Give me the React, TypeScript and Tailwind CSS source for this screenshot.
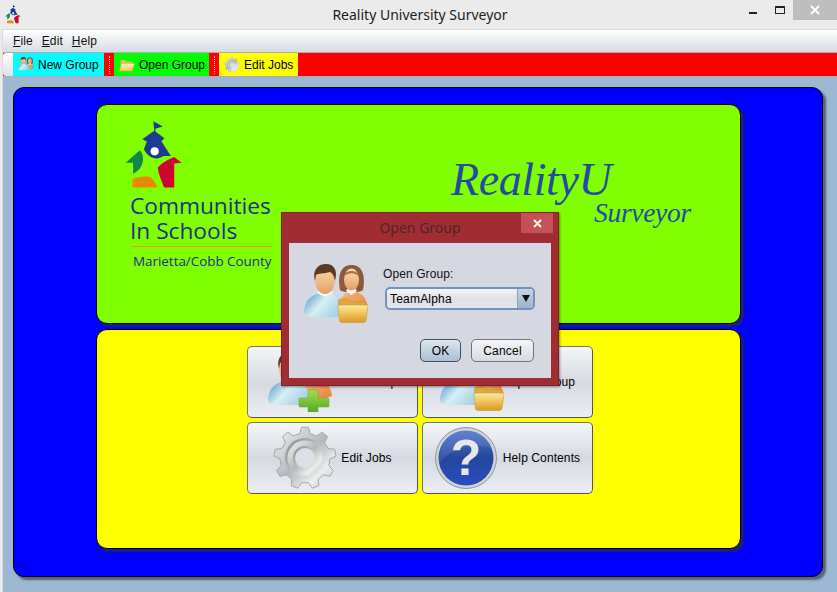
import React from "react";

const sans = "font-['Liberation_Sans',Arial,sans-serif]";

function Defs() {
  return (
    <svg width="0" height="0" className="absolute">
      <defs>
        <linearGradient id="shirt" x1="0" y1="0" x2="1" y2="0.5">
          <stop offset="0" stopColor="#4f94cc" />
          <stop offset="0.5" stopColor="#d6eef5" />
          <stop offset="1" stopColor="#a4d2e4" />
        </linearGradient>
        <linearGradient id="skin" x1="0" y1="0" x2="0" y2="1">
          <stop offset="0" stopColor="#fbdcb6" />
          <stop offset="1" stopColor="#e39f62" />
        </linearGradient>
        <linearGradient id="orange" x1="0" y1="0" x2="1" y2="1">
          <stop offset="0" stopColor="#f7b988" />
          <stop offset="1" stopColor="#e67e30" />
        </linearGradient>
        <linearGradient id="folder" x1="0" y1="0" x2="0" y2="1">
          <stop offset="0" stopColor="#fbe7a6" />
          <stop offset="0.5" stopColor="#f0c35a" />
          <stop offset="1" stopColor="#d8991f" />
        </linearGradient>
        <linearGradient id="green" x1="0" y1="0" x2="0" y2="1">
          <stop offset="0" stopColor="#a8dc50" />
          <stop offset="1" stopColor="#55a828" />
        </linearGradient>
        <linearGradient id="steel" x1="0" y1="0" x2="1" y2="1">
          <stop offset="0" stopColor="#f2f3f3" />
          <stop offset="0.5" stopColor="#b4b8bb" />
          <stop offset="0.75" stopColor="#eceded" />
          <stop offset="1" stopColor="#b9bcbf" />
        </linearGradient>
        <linearGradient id="steel2" x1="0" y1="0" x2="1" y2="1">
          <stop offset="0" stopColor="#85898c" />
          <stop offset="1" stopColor="#f4f5f5" />
        </linearGradient>
        <linearGradient id="ball" x1="0" y1="0" x2="0" y2="1">
          <stop offset="0" stopColor="#4c75cb" />
          <stop offset="0.5" stopColor="#23479c" />
          <stop offset="1" stopColor="#2b4cc0" />
        </linearGradient>
        <linearGradient id="tbfolder" x1="0" y1="0" x2="0" y2="1">
          <stop offset="0" stopColor="#fff3bb" />
          <stop offset="1" stopColor="#eec65c" />
        </linearGradient>
      </defs>
    </svg>
  );
}

function FolderShape() {
  return (
    <g>
      <path d="M34.500 42 L34.500 37 Q34.500 35 36.500 35 L43 35 Q44.500 35 45.500 36.500 L46.500 38 L60 38 Q62 38 62 40 L62 44Z" fill="#e0a93a" stroke="#c08a24" strokeWidth="0.5" />
      <path d="M34 43 Q34 41 36 41 L62 41 Q64.500 41 64 43 L62 56 Q61.800 58.500 59 58.500 L38 58.500 Q35.500 58.500 35.300 56 Z" fill="url(#folder)" stroke="#c8922a" strokeWidth="0.5" />
    </g>
  );
}

function People({ badge, size = 64 }: { badge?: "plus" | "folder"; size?: number }) {
  return (
    <svg width={size} height={(size * 60) / 64} viewBox="0 0 64 60" className="shrink-0">
      <path d="M36 44 Q36 31 44 28 L52 28 Q62 30 64 44 L52 48Z" fill="url(#orange)" />
      <path d="M36 26 C33 9 38 1 47.500 1 C57 1 62 9 59 26 C57 29 38 29 36 26Z" fill="#8a5a3a" />
      <path d="M42 27 L47.500 31 L53 27 L51 24 L44 24Z" fill="#fff" />
      <ellipse cx="47.500" cy="15.500" rx="7.500" ry="11" fill="url(#skin)" />
      <path d="M39.500 13 C41 5 54 5 55.500 13 C51 8 44 8 39.500 13Z" fill="#a86f42" />
      <path d="M0 46 Q2 33 13 30 L29 30 Q38 33 42 42 L40 53 L6 53 Q0 52 0 46Z" fill="url(#shirt)" />
      <path d="M13 29 L21 33 L29 29 L26 25 L16 25Z" fill="#f4f7f8" />
      <ellipse cx="21" cy="16" rx="10" ry="14" fill="url(#skin)" />
      <path d="M11 17 C8 6 14 0 22 0 C30 0 34 6 31 17 C30 11 28 9 26 8 C20 10 14 9 12 11 Z" fill="#5b3a26" />
      {badge === "folder" && <FolderShape />}
      {badge === "plus" && (
        <path d="M40 38 H50 V46 H60 Q61 46 61 47 V54 Q61 55 60 55 H50 V60 H40 V55 H32 Q31 55 31 54 V47 Q31 46 32 46 H40Z" fill="url(#green)" stroke="#6aa82e" strokeWidth="0.5" />
      )}
    </svg>
  );
}

function gearPath(teeth: number, R: number, r: number, c: number) {
  let d = "";
  const step = (Math.PI * 2) / teeth;
  for (let i = 0; i < teeth; i++) {
    const a = i * step - Math.PI / 2;
    const pts: [number, number][] = [
      [r, a - step * 0.3],
      [R, a - step * 0.16],
      [R, a + step * 0.16],
      [r, a + step * 0.3],
    ];
    pts.forEach(([rad, an], j) => {
      const x = c + rad * Math.cos(an);
      const y = c + rad * Math.sin(an);
      d += `${i === 0 && j === 0 ? "M" : "L"}${x.toFixed(2)} ${y.toFixed(2)} `;
    });
  }
  return d + "Z";
}

function Gear({ size = 64 }: { size?: number }) {
  return (
    <svg width={size} height={size} viewBox="0 0 64 64" className="shrink-0">
      <path d={gearPath(9, 31, 25, 32)} fill="url(#steel)" stroke="#a4a8ac" strokeWidth="1" strokeLinejoin="round" />
      <circle cx="32" cy="32" r="20" fill="url(#steel2)" />
      <circle cx="32" cy="32" r="17.500" fill="url(#steel)" />
      <circle cx="32" cy="32" r="12" fill="url(#steel2)" />
      <circle cx="32" cy="32" r="10" fill="#dcdfe5" />
    </svg>
  );
}

function Help() {
  return (
    <svg width="62" height="62" viewBox="0 0 62 62" className="shrink-0 mr-[2px]">
      <circle cx="31" cy="31" r="30.500" fill="#d0d4d8" stroke="#8f959a" strokeWidth="1" />
      <circle cx="31" cy="31" r="27.500" fill="url(#ball)" />
      <path d="M4 36 C18 20 40 14 58 22 C52 8 40 3.500 31 3.500 C14 3.500 3.500 18 4 36Z" fill="#fff" opacity="0.1" />
      <text x="31" y="48" textAnchor="middle" fontSize="50" fontWeight="700" fill="#e4e6ea" fontFamily="Liberation Sans, sans-serif">?</text>
    </svg>
  );
}

function Logo({ w }: { w: number }) {
  return (
    <svg width={w} height={(w * 200) / 172} viewBox="76 46 172 200" className="shrink-0">
      <path d="M160 47 L188 62 L166 69 L166 78 L163 78Z" fill="#1f3a93" />
      <path d="M163 75 L193 97 L184 106 L212 150 L190 150 C172 162 148 160 132 130 L141 107 L127 100Z" fill="#1f3a93" />
      <circle cx="164" cy="136" r="12" fill="#fff" />
      <path d="M78 170 L120 133 C137 150 132 190 100 202 L100 170Z" fill="#0f8a46" />
      <path d="M173 185 C185 170 205 160 222 153 L244 170 L222 172 L222 243 L192 243 C185 225 175 205 173 185Z" fill="#d0052f" />
      <path d="M98 218 C120 210 145 208 155 215 C165 225 170 235 172 243 L98 243Z" fill="#e98a06" />
    </svg>
  );
}

function SmallFolder() {
  return (
    <svg width="16" height="16" viewBox="0 0 16 16" className="shrink-0">
      <path d="M1.500 3 H6 L7.500 4.500 H13 V8 H1.500Z" fill="#e2bd5a" />
      <path d="M0.500 14 L2.500 6.500 H15.500 L13 14Z" fill="url(#tbfolder)" stroke="#dcb44e" strokeWidth="0.5" />
    </svg>
  );
}

function ToolButton({ w, bg, icon, label }: { w: string; bg: string; icon: React.ReactNode; label: string }) {
  return (
    <div className={`${w} ${bg} h-full flex items-center gap-[4px] pl-[5px] shrink-0`}>
      {icon}
      <span className="text-[12px] text-black whitespace-nowrap">{label}</span>
    </div>
  );
}

function Sep() {
  return (
    <div className="w-[10px] h-full flex justify-center items-center shrink-0">
      <div className="h-[18px] border-l border-dotted border-white/80" />
    </div>
  );
}

function BigButton({ icon, label }: { icon: React.ReactNode; label: string }) {
  return (
    <div className="h-[72px] rounded-[5px] border border-[#6f7480] border-b-[#50545c] border-r-[#50545c] bg-gradient-to-b from-[#f5f6f9] via-[#d6d9e1] to-[#eceef3] flex items-center justify-center gap-[4px]">
      {icon}
      <span className="text-[12px] tracking-[0.1px] text-black whitespace-nowrap">{label}</span>
    </div>
  );
}

export default function App() {
  return (
    <div className={`${sans} relative w-[837px] h-[592px] overflow-hidden bg-[#ebebeb] flex flex-col`}>
      <Defs />
      {/* title bar */}
      <div className="relative h-[29px] shrink-0 flex items-center justify-center">
        <div className="absolute left-[5px] top-[5px]"><Logo w={16} /></div>
        <span className="ml-[3px] font-['Noto_Sans',sans-serif] text-[14px] text-[#1c1c1c] pb-[1px]">Reality University Surveyor</span>
        <div className="absolute right-0 top-0 h-[20px] flex">
          <div className="w-[44px] mr-0 h-full bg-[#bdbdbd] flex items-center justify-center order-3">
            <svg width="10" height="10" viewBox="0 0 10 10"><path d="M1 1 L9 9 M9 1 L1 9" stroke="#fff" strokeWidth="1.800" /></svg>
          </div>
          <div className="w-[8px] mr-[18px] flex items-center order-1"><div className="w-[8px] h-[2px] bg-[#222] mt-[6px]" /></div>
          <div className="mr-[8px] flex items-center order-2"><div className="w-[10px] h-[8px] border border-[#222] border-t-2" /></div>
        </div>
      </div>
      <div className="flex-1 flex flex-col ml-[2px] border-l border-t border-[#dcdcdc]">
        {/* menu */}
        <div className="h-[22px] shrink-0 bg-gradient-to-b from-white to-[#d8dbe3] flex items-center pl-[10px] gap-[9px] text-[12px] text-[#111] tracking-[0.1px]">
          <span><span className="underline">F</span>ile</span>
          <span><span className="underline">E</span>dit</span>
          <span><span className="underline">H</span>elp</span>
        </div>
        {/* toolbar */}
        <div className="h-[25px] shrink-0 bg-[#ff0000] border-y border-[#a9aeb8] flex items-center">
          <div className="w-[10px] h-full bg-gradient-to-b from-white to-[#dfe1e6] rounded-l-[3px]" />
          <ToolButton w="w-[91px]" bg="bg-[#00ffff]" icon={<People size={16} />} label="New Group" />
          <Sep />
          <ToolButton w="w-[95px]" bg="bg-[#00ff00]" icon={<SmallFolder />} label="Open Group" />
          <Sep />
          <ToolButton w="w-[79px]" bg="bg-[#ffff00]" icon={<Gear size={16} />} label="Edit Jobs" />
        </div>
        {/* content */}
        <div className="flex-1 min-h-0 flex bg-[#9db8d2] pt-[10px] pl-[10px] pr-[14px] pb-[15px]">
          <div className="flex-1 flex flex-col items-start pl-[82px] gap-[5px] pt-[16px] bg-[#0000ff] border border-black rounded-[11px] shadow-[3px_3px_2px_rgba(40,40,60,0.6)]">
            <div className="w-[645px] h-[220px] shrink-0 bg-[#80ff00] border border-black rounded-[11px] shadow-[3px_3px_2px_rgba(40,40,90,0.7)] flex">
              <div className="w-[185px] ml-[28px] pt-[16px] flex flex-col shrink-0 text-[#1c2f8f] font-['Open_Sans',sans-serif]">
                <Logo w={58} />
                <div className="ml-[5px] mt-[5px] text-[22.700px] leading-[25px] whitespace-nowrap">Communities<br />In Schools</div>
                <div className="ml-[7px] mt-[3px] w-[140px] h-px bg-[#f0903a]" />
                <div className="ml-[8px] mt-[5px] text-[13.400px] leading-[18px] whitespace-nowrap">Marietta/Cobb County</div>
              </div>
              <div className="ml-[141px] pt-[44px] text-[#234ba6] font-['Liberation_Serif',serif] italic">
                <div className="text-[46px] leading-[62px] tracking-[-0.4px] whitespace-nowrap">RealityU</div>
                <div className="ml-[143px] -mt-[14px] text-[27.500px] leading-[32px] tracking-[-0.3px] whitespace-nowrap">Surveyor</div>
              </div>
            </div>
            <div className="w-[645px] h-[220px] shrink-0 bg-[#ffff00] border border-black rounded-[11px] shadow-[3px_3px_2px_rgba(40,40,90,0.7)] pt-[16px] pl-[150px] grid grid-cols-[171px_171px] gap-[4px] justify-start content-start">
              <BigButton icon={<People badge="plus" />} label="New Group" />
              <BigButton icon={<People badge="folder" />} label="Open Group" />
              <BigButton icon={<Gear />} label="Edit Jobs" />
              <BigButton icon={<Help />} label="Help Contents" />
            </div>
          </div>
        </div>
      </div>
      {/* dialog */}
      <div className="absolute left-[281px] top-[212px] w-[278px] h-[174px] bg-[#9f2d33] border border-[#7c2228] shadow-[1px_1px_2px_rgba(0,0,0,0.4)] flex flex-col px-[7px] pb-[7px]">
        <div className="relative h-[30px] shrink-0 flex items-center justify-center font-['Noto_Sans',sans-serif] text-[14px] text-[#4f2429] pb-[2px]">
          Open Group
          <div className="absolute right-[-2px] top-0 w-[32px] h-[20px] bg-[#c75056] flex items-center justify-center">
            <svg width="9" height="9" viewBox="0 0 9 9"><path d="M1 1 L8 8 M8 1 L1 8" stroke="#fff" strokeWidth="1.800" /></svg>
          </div>
        </div>
        <div className="flex-1 bg-[#d5d8e0] flex flex-col">
          <div className="flex pl-[15px] pt-[21px]">
            <People badge="folder" />
            <div className="ml-[15px] pt-[3px] flex flex-col">
              <span className="text-[12px] tracking-[0.1px] leading-[14px] text-[#111]">Open Group:</span>
              <div className="ml-[2px] mt-[6px] w-[150px] h-[23px] rounded-[5px] border-2 border-[#6f93bd] bg-gradient-to-b from-[#f4f5f8] via-[#dfe1e8] to-[#e4e6ec] flex items-center justify-between overflow-hidden">
                <span className="ml-[3px] text-[12px] tracking-[0.2px] text-black">TeamAlpha</span>
                <div className="w-[16px] h-full bg-gradient-to-b from-[#c7d5e4] to-[#9db3ca] border-l border-[#8da2ba] flex items-center justify-center">
                  <div className="w-0 h-0 border-x-[4px] border-x-transparent border-t-[7px] border-t-[#111]" />
                </div>
              </div>
            </div>
          </div>
          <div className="flex justify-end gap-[10px] pr-[17px] mt-[15px]">
            <div className="w-[41px] h-[23px] rounded-[5px] border border-[#3e5068] bg-gradient-to-b from-[#dfe5ec] to-[#a9c0d6] flex items-center justify-center text-[12px] tracking-[0.2px] text-black">OK</div>
            <div className="w-[63px] h-[23px] rounded-[5px] border border-[#6f7480] bg-gradient-to-b from-[#f5f6f9] to-[#d8dae2] flex items-center justify-center text-[12px] tracking-[0.2px] text-black">Cancel</div>
          </div>
        </div>
      </div>
    </div>
  );
}
